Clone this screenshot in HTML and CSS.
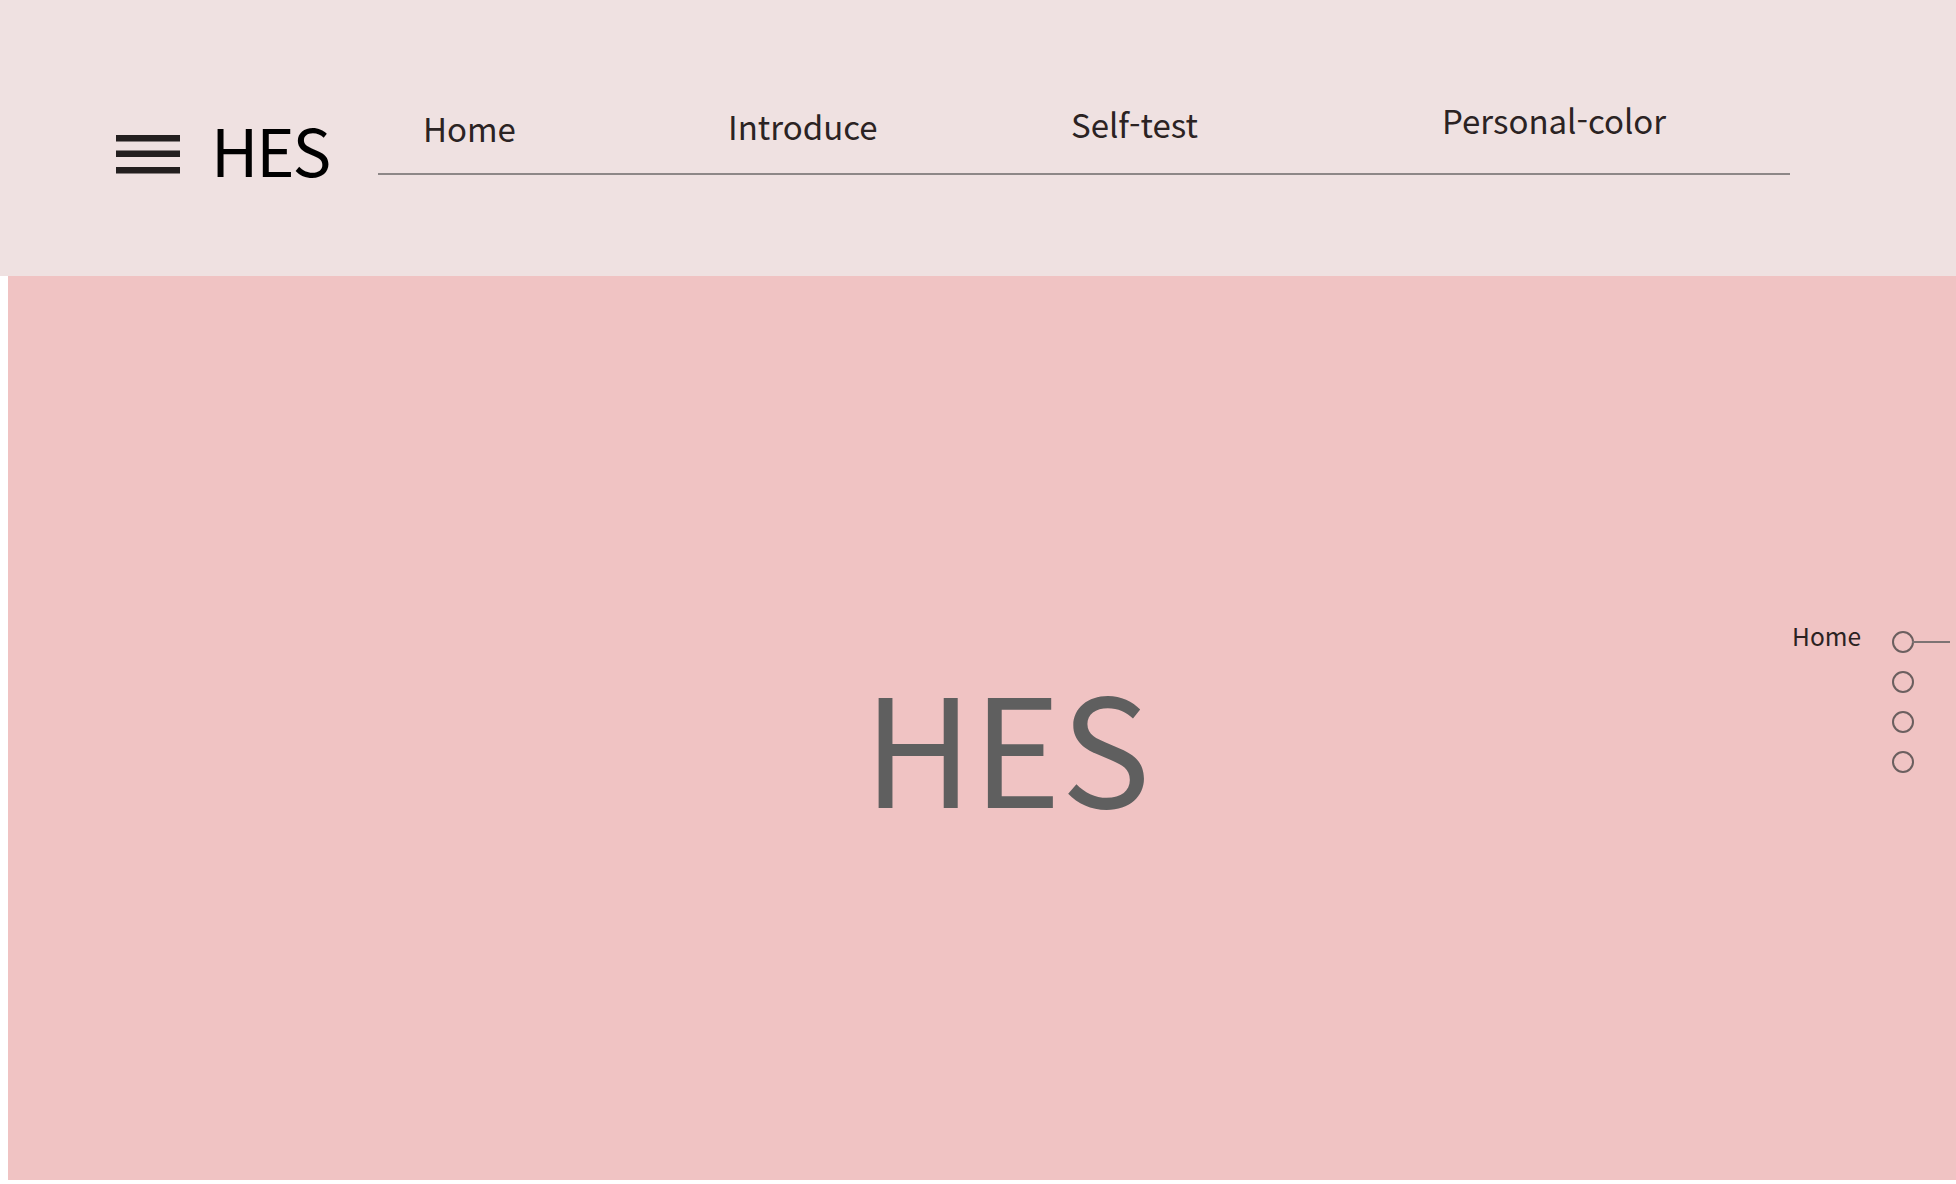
FILE: index.html
```html
<!DOCTYPE html>
<html lang="ko">
<head>
<meta charset="utf-8">
<title>HES</title>
<link rel="stylesheet" href="styles.css">
</head>
<body>
<header class="header">
  <button class="menu-btn" aria-label="menu">
    <svg width="64" height="39" viewBox="0 0 64 39"><rect x="0" y="0" width="64" height="6.5" fill="#231f1f"/><rect x="0" y="15.5" width="64" height="6.5" fill="#231f1f"/><rect x="0" y="32" width="64" height="6.5" fill="#231f1f"/></svg>
  </button>
  <div class="logo">HES</div>
  <nav class="gnb">
    <a class="gnb-item gnb-home" href="#">Home</a>
    <a class="gnb-item gnb-intro" href="#">Introduce</a>
    <a class="gnb-item gnb-test" href="#">Self-test</a>
    <a class="gnb-item gnb-color" href="#">Personal-color</a>
  </nav>
</header>
<main class="hero">
  <h1 class="hero-title">HES</h1>
  <ul class="side-nav">
    <li class="dot active"><span class="dot-label">Home</span><span class="dot-line"></span></li>
    <li class="dot"></li>
    <li class="dot"></li>
    <li class="dot"></li>
  </ul>
</main>
</body>
</html>
```
FILE: styles.css
```css
* { box-sizing: border-box; }
body {
  margin: 0;
  background: #ffffff;
  font-family: "Noto Sans CJK KR", "Noto Sans", sans-serif;
  color: #2b2222;
}
.header {
  height: 276px;
  background: #efe1e1;
  display: grid;
  grid-template-columns: 64px 198px 1412px;
  align-items: start;
  padding-left: 116px;
}
.menu-btn {
  margin-top: 135px;
  padding: 0;
  border: 0;
  background: none;
  width: 64px;
  height: 39px;
  display: block;
}
.menu-btn svg { display: block; }
.logo {
  margin-top: 117px;
  padding-left: 31px;
  font-size: 65px;
  letter-spacing: -2px;
  line-height: 1;
  color: #000;
}
.gnb {
  margin-top: 103px;
  height: 72px;
  border-bottom: 2px solid #8d8787;
  display: grid;
  grid-template-columns: 305px 343px 371px auto;
  align-items: end;
  padding-left: 45px;
}
.gnb-item {
  display: inline-block;
  justify-self: start;
  font-size: 33px;
  line-height: 1;
  color: #2b2323;
  text-decoration: none;
}
.gnb-home { padding-bottom: 28px; }
.gnb-intro { padding-bottom: 30px; }
.gnb-test { padding-bottom: 32px; }
.gnb-color { padding-bottom: 36px; }

.hero {
  position: relative;
  margin: 0 0 4px 8px;
  height: 904px;
  background: #f0c3c3;
  display: flex;
  align-items: center;
  justify-content: center;
  padding: 29px 0 0 50px;
}
.hero-title {
  margin: 0;
  font-size: 150px;
  font-weight: 400;
  line-height: 1;
  color: #5f5f5f;
}
.side-nav {
  position: absolute;
  left: 1884px;
  top: 355px;
  margin: 0;
  padding: 0;
  list-style: none;
  display: flex;
  flex-direction: column;
  gap: 18px;
}
.dot {
  position: relative;
  width: 22px;
  height: 22px;
  border: 2px solid #6b5f5f;
  border-radius: 50%;
}
.dot-label {
  position: absolute;
  right: 51px;
  top: -9px;
  font-size: 24.5px;
  line-height: 1;
  color: #2b2222;
  white-space: nowrap;
}
.dot-line {
  position: absolute;
  left: 18px;
  top: 8px;
  width: 38px;
  height: 2px;
  background: #7d7373;
}
```
